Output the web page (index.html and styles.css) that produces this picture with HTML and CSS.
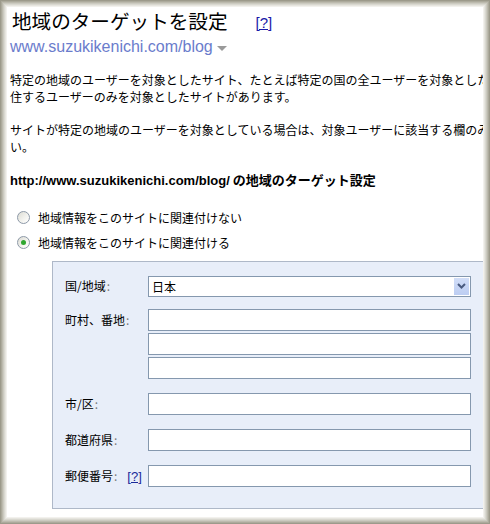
FILE: index.html
```html
<!DOCTYPE html>
<html lang="ja">
<head>
<meta charset="utf-8">
<title>地域のターゲットを設定</title>
<link rel="stylesheet" href="styles.css">
</head>
<body>
<div class="frame">
  <div class="page">
    <h1 class="title">地域のターゲットを設定<a class="help-big" href="#">[?]</a></h1>
    <div class="site">www.suzukikenichi.com/blog<span class="caret"></span></div>

    <p class="para">特定の地域のユーザーを対象としたサイト、たとえば特定の国の全ユーザーを対象としたサイトや、特定の都市に居<br>住するユーザーのみを対象としたサイトがあります。</p>
    <p class="para">サイトが特定の地域のユーザーを対象としている場合は、対象ユーザーに該当する欄のみを入力してくださ<br>い。</p>

    <p class="heading"><span class="lat">http://www.suzukikenichi.com/blog/</span> の地域のターゲット設定</p>

    <div class="choices">
      <label class="choice"><span class="radio"></span>地域情報をこのサイトに関連付けない</label>
      <label class="choice"><span class="radio checked"></span>地域情報をこのサイトに関連付ける</label>
    </div>

    <div class="box">
      <div class="row row-country">
        <div class="label">国/地域<span class="colon">:</span></div>
        <div class="select"><span class="select-text">日本</span><span class="select-btn"><svg width="9" height="6" viewBox="0 0 9 6"><path d="M1 1 L4.5 4.5 L8 1" fill="none" stroke="#4a5b80" stroke-width="2"/></svg></span></div>
      </div>
      <div class="row">
        <div class="label">町村、番地<span class="colon">:</span></div>
        <div class="stack">
          <div class="input"></div>
          <div class="input"></div>
          <div class="input"></div>
        </div>
      </div>
      <div class="row">
        <div class="label">市/区<span class="colon">:</span></div>
        <div class="input"></div>
      </div>
      <div class="row">
        <div class="label">都道府県<span class="colon">:</span></div>
        <div class="input"></div>
      </div>
      <div class="row">
        <div class="label">郵便番号<span class="colon">:</span><a class="help-small" href="#">[?]</a></div>
        <div class="input"></div>
      </div>
    </div>
  </div>
</div>
</body>
</html>
```

FILE: styles.css
```css
html, body {
  margin: 0;
  padding: 0;
  background: #ffffff;
}

.frame {
  position: relative;
  width: 490px;
  height: 524px;
  overflow: hidden;
  background: #ffffff;
  font-family: "Liberation Sans", "Noto Sans CJK JP", sans-serif;
  font-size: 12px;
  color: #000;
}

.frame::after {
  content: "";
  position: absolute;
  left: 0;
  top: 0;
  right: 0;
  bottom: 0;
  pointer-events: none;
  box-shadow:
    inset 0 0 0 1px #9c9a8b,
    inset 0 0 0 2px #acaa9c,
    inset 0 0 0 3px #bcbaae,
    inset 0 0 0 4px #cbcac0,
    inset 0 0 0 5px #d9d8d0,
    inset 0 0 0 6px #e6e5df,
    inset 0 0 0 7px #f2f1ed;
}

.page {
  padding: 9px 0 0 10px;
  white-space: nowrap;
}

.title {
  margin: 0 0 0 2px;
  font-family: "Noto Sans CJK JP", sans-serif;
  font-weight: normal;
  font-size: 19.6px;
  line-height: 24px;
  height: 24px;
}

.help-big {
  font-family: "Liberation Sans", sans-serif;
  font-size: 15px;
  color: #1a1aa8;
  margin-left: 28px;
  vertical-align: 1px;
}

.site {
  margin-top: 4px;
  height: 20px;
  line-height: 20px;
  font-size: 16px;
  color: #6a7ccc;
  display: flex;
  align-items: center;
}

.caret {
  display: inline-block;
  width: 0;
  height: 0;
  margin-left: 4px;
  margin-top: 3px;
  border-left: 5px solid transparent;
  border-right: 5px solid transparent;
  border-top: 5px solid #9a9a9a;
}

.para {
  margin: 14px 0 0 0;
  font-family: "Noto Sans CJK JP", sans-serif;
  font-size: 12px;
  line-height: 17px;
}

.para + .para {
  margin-top: 16px;
}

.heading {
  margin: 16px 0 0 0;
  font-family: "Noto Sans CJK JP", sans-serif;
  font-weight: bold;
  font-size: 13px;
  line-height: 17px;
}

.heading .lat {
  font-family: "Liberation Sans", sans-serif;
}

.choices {
  margin-top: 16px;
  display: flex;
  flex-direction: column;
}

.choice {
  display: flex;
  align-items: center;
  height: 25px;
  padding-left: 7px;
  font-family: "Noto Sans CJK JP", sans-serif;
  font-size: 12px;
}

.radio {
  position: relative;
  width: 11px;
  height: 11px;
  border-radius: 50%;
  border: 1px solid #8d99a8;
  background: linear-gradient(135deg, #dcdcd4 0%, #f4f4f0 60%, #ffffff 100%);
  margin-right: 8px;
  flex: none;
}

.radio.checked::after {
  content: "";
  position: absolute;
  left: 3px;
  top: 3px;
  width: 5px;
  height: 5px;
  border-radius: 50%;
  background: #2fa62f;
}

.box {
  margin: 6px 0 0 42px;
  width: 433px;
  height: 248px;
  box-sizing: border-box;
  border: 1px solid #aeb8c8;
  background: #e8eef9;
  padding: 13px 0 0 12px;
  display: flex;
  flex-direction: column;
  gap: 14px;
}

.row {
  display: flex;
  align-items: flex-start;
}

.row-country {
  margin-bottom: -2px;
  align-items: center;
}

.label {
  width: 83px;
  flex: none;
  font-family: "Noto Sans CJK JP", sans-serif;
  font-size: 12px;
  line-height: 22px;
}

.colon {
  color: #7a7a7a;
  margin-left: 1px;
}

.help-small {
  font-family: "Liberation Sans", sans-serif;
  color: #1a2a9a;
  font-size: 13px;
  margin-left: 10px;
}

.stack {
  display: flex;
  flex-direction: column;
  gap: 2px;
}

.input {
  width: 323px;
  height: 22px;
  box-sizing: border-box;
  border: 1px solid #8598ae;
  background: #ffffff;
}

.select {
  position: relative;
  width: 323px;
  height: 21px;
  box-sizing: border-box;
  border: 1px solid #8598ae;
  background: #ffffff;
  display: flex;
  align-items: center;
  padding-left: 3px;
  font-family: "Noto Sans CJK JP", sans-serif;
  font-size: 12px;
}

.select-btn {
  position: absolute;
  right: 1px;
  top: 1px;
  bottom: 1px;
  width: 15px;
  background: linear-gradient(180deg, #d2def8 0%, #bccdf2 100%);
  display: flex;
  align-items: center;
  justify-content: center;
}
```
